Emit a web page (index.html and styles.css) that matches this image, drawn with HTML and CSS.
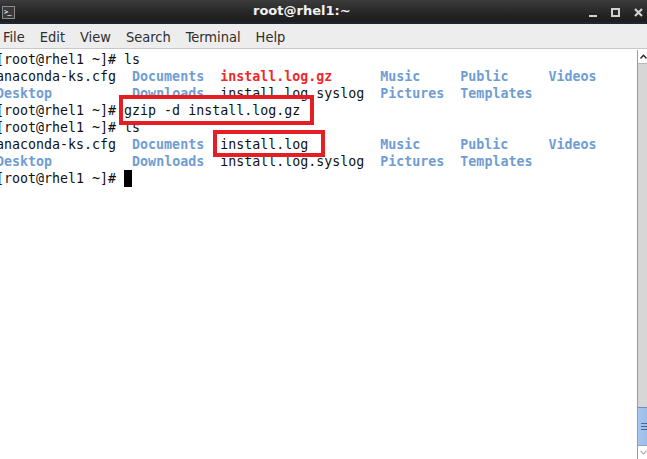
FILE: index.html
```html
<!DOCTYPE html>
<html>
<head>
<meta charset="utf-8">
<link rel="stylesheet" href="styles.css">
</head>
<body>
<div class="window">
  <div class="titlebar">
    <div class="appicon"><span class="prompt">&gt;_</span></div>
    <div class="title">root@rhel1:~</div>
    <div class="winbtns">
      <span class="btn-min"></span>
      <span class="btn-max"></span>
      <svg class="btn-close" width="9" height="9" viewBox="0 0 9 9"><path d="M1 1L8 8M8 1L1 8" stroke="#d0d0d0" stroke-width="2.2"/></svg>
    </div>
  </div>
  <div class="menubar">
    <span class="mi">File</span>
    <span class="mi">Edit</span>
    <span class="mi">View</span>
    <span class="mi">Search</span>
    <span class="mi">Terminal</span>
    <span class="mi">Help</span>
  </div>
  <div class="body">
    <div class="term">
      <div class="ln">[root@rhel1 ~]# ls</div>
      <div class="ln">anaconda-ks.cfg  <b class="dir">Documents</b>  <b class="arc">install.log.gz</b>      <b class="dir">Music</b>     <b class="dir">Public</b>     <b class="dir">Videos</b></div>
      <div class="ln"><b class="dir">Desktop</b>          <b class="dir">Downloads</b>  install.log.syslog  <b class="dir">Pictures</b>  <b class="dir">Templates</b></div>
      <div class="ln">[root@rhel1 ~]# gzip -d install.log.gz</div>
      <div class="ln">[root@rhel1 ~]# ls</div>
      <div class="ln">anaconda-ks.cfg  <b class="dir">Documents</b>  install.log         <b class="dir">Music</b>     <b class="dir">Public</b>     <b class="dir">Videos</b></div>
      <div class="ln"><b class="dir">Desktop</b>          <b class="dir">Downloads</b>  install.log.syslog  <b class="dir">Pictures</b>  <b class="dir">Templates</b></div>
      <div class="ln">[root@rhel1 ~]# <span class="cursor"> </span></div>
      <div class="mark mark1"></div>
      <div class="mark mark2"></div>
    </div>
    <div class="scrollbar">
      <div class="step step-up"><svg width="7" height="5" viewBox="0 0 7 5"><path d="M0.5 4.5L3.5 1.2L6.5 4.5" fill="none" stroke="#222" stroke-width="1.3"/></svg></div>
      <div class="trough"></div>
      <div class="thumb"><span class="grip"></span><span class="grip"></span><span class="grip"></span></div>
      <div class="step step-down"><svg width="7" height="5" viewBox="0 0 7 5"><path d="M0.5 0.8L3.5 4L6.5 0.8" fill="none" stroke="#aaa" stroke-width="1.1"/></svg></div>
    </div>
  </div>
</div>
</body>
</html>
```

FILE: styles.css
```css
* { box-sizing: border-box; }
html, body { margin: 0; padding: 0; background: #fff; }
.window {
  width: 647px;
  height: 459px;
  display: flex;
  flex-direction: column;
  overflow: hidden;
}
.titlebar {
  height: 24px;
  flex: none;
  display: flex;
  align-items: center;
  background: linear-gradient(#3c3c3c, #262626 60%, #1d1d1d);
  border-bottom: 2px solid #1c2634;
  position: relative;
  padding-left: 2px;
}
.appicon {
  width: 13px;
  height: 13px;
  background: #3a3a3a;
  border: 1px solid #8a8a8a;
  display: flex;
  align-items: center;
  padding-left: 1px;
  margin-top: 2px;
}
.prompt {
  font-family: "DejaVu Sans Mono", monospace;
  font-size: 7px;
  font-weight: bold;
  color: #e6e6e6;
  line-height: 7px;
  letter-spacing: -1px;
}
.title {
  position: absolute;
  left: 253px;
  top: 3px;
  font-family: "DejaVu Sans", sans-serif;
  font-weight: bold;
  font-size: 13px;
  color: #f2f2f2;
  line-height: 16px;
}
.winbtns {
  margin-left: auto;
  display: flex;
  align-items: center;
  gap: 14px;
  padding-right: 4px;
  margin-top: 2px;
}
.btn-min {
  width: 8px;
  height: 9px;
  border-bottom: 2px solid #d0d0d0;
}
.btn-max {
  width: 9px;
  height: 9px;
  border: 2px solid #d0d0d0;
}
.btn-close { display: block; }
.menubar {
  height: 25px;
  flex: none;
  background: #ededed;
  border-bottom: 1px solid #c8c8c8;
  display: flex;
  align-items: center;
  padding-left: 3px;
  gap: 15px;
  font-family: "DejaVu Sans Condensed", "DejaVu Sans", sans-serif;
  font-size: 14.5px;
  color: #2e2e2e;
}
.mi { line-height: 18px; padding-top: 2px; }
.body {
  flex: 1;
  display: flex;
  min-height: 0;
}
.term {
  flex: 1;
  position: relative;
  background: #fff;
  padding-top: 2px;
  overflow: hidden;
}
.ln {
  height: 17px;
  line-height: 17px;
  white-space: pre;
  font-family: "DejaVu Sans Mono", monospace;
  font-size: 13.3px;
  color: #111;
  margin-left: -4px;
}
.dir { color: #6f9dd3; font-weight: bold; }
.arc { color: #ef2929; font-weight: bold; }
.cursor {
  display: inline-block;
  width: 8px;
  height: 17px;
  background: #000;
  vertical-align: top;
}
.mark {
  position: absolute;
  border: 4px solid #e51d25;
}
.mark1 { left: 119px; top: 46px; width: 195px; height: 30px; }
.mark2 { left: 213px; top: 81px; width: 112px; height: 27px; }
.scrollbar {
  width: 10px;
  flex: none;
  display: flex;
  flex-direction: column;
  border-left: 1px solid #9a9a9a;
  margin-top: 1px;
}
.step {
  height: 14px;
  flex: none;
  background: #fff;
  display: flex;
  justify-content: center;
  align-items: center;
  border-bottom: 1px solid #b8b8b8;
}
.step-down { border-bottom: none; border-top: 1px solid #8aa6cc; }
.step svg { display: block; margin-left: 1px; }
.trough {
  flex: 1;
  background: #d6d6d6;
}
.thumb {
  height: 38px;
  flex: none;
  background: linear-gradient(90deg, #a9c5ec, #9dbde8);
  border-top: 1px solid #6d8fc0;
  display: flex;
  flex-direction: column;
  justify-content: center;
  align-items: flex-end;
  gap: 2px;
}
.grip {
  width: 6px;
  height: 1px;
  background: #4a6a9a;
}
```
